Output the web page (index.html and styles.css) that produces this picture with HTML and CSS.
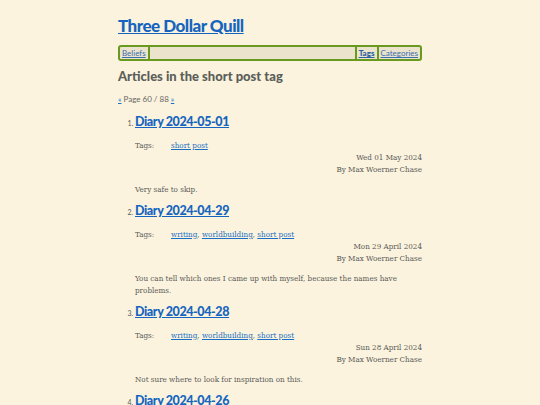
FILE: index.html
```html
<!DOCTYPE html>
<html>
<head>
<meta charset="utf-8">
<link rel="stylesheet" href="styles.css">
</head>
<body>
<div class="page">
  <h1 class="site-title"><a href="#">Three Dollar Quill</a></h1>
  <nav class="nav">
    <a class="nav-link" href="#">Beliefs</a>
    <span class="nav-fill"></span>
    <a class="nav-link current" href="#">Tags</a>
    <a class="nav-link" href="#">Categories</a>
  </nav>
  <h2 class="tag-heading">Articles in the short post tag</h2>
  <p class="pager"><a href="#">«</a> Page 60 / 88 <a href="#">»</a></p>
  <ol class="articles" start="1">
    <li class="article">
      <h3 class="article-title"><a href="#">Diary 2024-05-01</a></h3>
      <div class="tags"><span class="tags-label">Tags:</span><span class="tags-list"><a href="#">short post</a></span></div>
      <div class="meta">Wed 01 May 2024<br>By Max Woerner Chase</div>
      <p class="summary">Very safe to skip.</p>
    </li>
    <li class="article">
      <h3 class="article-title"><a href="#">Diary 2024-04-29</a></h3>
      <div class="tags"><span class="tags-label">Tags:</span><span class="tags-list"><a href="#">writing</a>, <a href="#">worldbuilding</a>, <a href="#">short post</a></span></div>
      <div class="meta">Mon 29 April 2024<br>By Max Woerner Chase</div>
      <p class="summary">You can tell which ones I came up with myself, because the names have problems.</p>
    </li>
    <li class="article">
      <h3 class="article-title"><a href="#">Diary 2024-04-28</a></h3>
      <div class="tags"><span class="tags-label">Tags:</span><span class="tags-list"><a href="#">writing</a>, <a href="#">worldbuilding</a>, <a href="#">short post</a></span></div>
      <div class="meta">Sun 28 April 2024<br>By Max Woerner Chase</div>
      <p class="summary">Not sure where to look for inspiration on this.</p>
    </li>
    <li class="article">
      <h3 class="article-title"><a href="#">Diary 2024-04-26</a></h3>
    </li>
  </ol>
</div>
</body>
</html>
```
FILE: styles.css
```css
html, body {
  margin: 0;
  padding: 0;
  background: #fbf3dd;
}
body {
  font-family: "DejaVu Serif Condensed", "DejaVu Serif", serif;
  font-stretch: condensed;
  color: #5a5a5a;
  font-size: 8px;
}
.page {
  width: 304px;
  margin: 0 auto;
  padding-top: 14px;
}
a { color: #1a6fc4; }
.site-title {
  margin: 0;
  font-family: "Lato", sans-serif;
  font-weight: 900;
  font-size: 17px;
  letter-spacing: -0.5px;
  line-height: 24px;
}
.site-title a { color: #1565c0; }
.nav {
  margin-top: 7px;
  display: flex;
  align-items: stretch;
  border: 2px solid #679a1e;
  border-radius: 3px;
  background: #ebe3cc;
  height: 12px;
  font-family: "Lato", sans-serif;
  font-stretch: normal;
  font-size: 8px;
  line-height: 12px;
}
.nav-link {
  padding: 0 2px;
  color: #3a6fb0;
}
.nav-link:first-child { border-right: 2px solid #679a1e; }
.nav-fill { flex: 1; }
.nav-link.current {
  font-weight: 900;
  border-left: 2px solid #679a1e;
  border-right: 2px solid #679a1e;
  color: #2a60a0;
}
.tag-heading {
  margin: 6px 0 0;
  font-family: "Lato", sans-serif;
  font-stretch: normal;
  font-weight: 900;
  font-size: 13px;
  line-height: 18px;
  color: #5a5e5a;
}
.pager {
  margin: 8px 0 0;
  font-family: "Lato", sans-serif;
  font-stretch: normal;
  font-size: 8px;
  line-height: 12px;
  color: #666;
}
.articles {
  margin: 8px 0 0;
  padding-left: 17px;
  font-family: "Lato", sans-serif;
  font-stretch: normal;
}
.article { font-size: 7px; }
.article-title {
  margin: 0;
  font-family: "Lato", sans-serif;
  font-stretch: normal;
  font-weight: 900;
  font-size: 12.5px;
  letter-spacing: -0.4px;
  line-height: 18px;
}
.article-title a { color: #1565c0; }
.tags, .meta, .summary {
  font-family: "DejaVu Serif Condensed", "DejaVu Serif", serif;
  font-stretch: condensed;
}
.tags {
  margin-top: 9px;
  display: flex;
  font-size: 8px;
  line-height: 12px;
}
.tags-label { width: 36px; }
.meta {
  text-align: right;
  font-size: 8px;
  line-height: 12px;
}
.summary {
  margin: 8px 0 6px;
  font-size: 8px;
  line-height: 12px;
}
```
